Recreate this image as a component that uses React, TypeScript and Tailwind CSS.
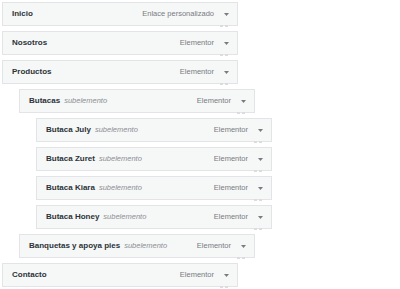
import React from "react";

type Item = { title: string; sub?: boolean; type: string; level: number };

const items: Item[] = [
  { title: "Inicio", type: "Enlace personalizado", level: 0 },
  { title: "Nosotros", type: "Elementor", level: 0 },
  { title: "Productos", type: "Elementor", level: 0 },
  { title: "Butacas", sub: true, type: "Elementor", level: 1 },
  { title: "Butaca July", sub: true, type: "Elementor", level: 2 },
  { title: "Butaca Zuret", sub: true, type: "Elementor", level: 2 },
  { title: "Butaca Kiara", sub: true, type: "Elementor", level: 2 },
  { title: "Butaca Honey", sub: true, type: "Elementor", level: 2 },
  { title: "Banquetas y apoya pies", sub: true, type: "Elementor", level: 1 },
  { title: "Contacto", type: "Elementor", level: 0 },
];

const indent = ["ml-0", "ml-[17px]", "ml-[34px]"];

function Row({ item }: { item: Item }) {
  return (
    <div
      className={`${indent[item.level]} relative w-[236px] h-[24px] flex items-center border border-[#e2e4e7] bg-[#f6f7f7] pl-[9px] pr-[7px]`}
    >
      <span className="text-[8px] font-bold text-[#2c3338] leading-none">{item.title}</span>
      {item.sub && (
        <span className="ml-[4px] text-[7.5px] italic text-[#8c8f94] leading-none">subelemento</span>
      )}
      <span className="ml-auto text-[7.5px] text-[#787c82] leading-none">{item.type}</span>
      <svg width="5" height="3" viewBox="0 0 5 3" className="ml-[10px] mr-[1px]">
        <path d="M0 0 L5 0 L2.5 3 Z" fill="#787c82" />
      </svg>
      <span className="absolute right-[9px] bottom-[-2px] flex gap-[2px]">
        <span className="w-[3px] h-[2px] bg-[#dcdcde]" />
        <span className="w-[3px] h-[2px] bg-[#dcdcde]" />
      </span>
    </div>
  );
}

export default function App() {
  return (
    <div
      className="w-[400px] h-[289px] bg-white pt-[2px] pl-[2px] flex flex-col gap-[5px]"
      style={{ fontFamily: '"Liberation Sans", Arial, sans-serif' }}
    >
      {items.map((it, i) => (
        <Row key={i} item={it} />
      ))}
    </div>
  );
}
